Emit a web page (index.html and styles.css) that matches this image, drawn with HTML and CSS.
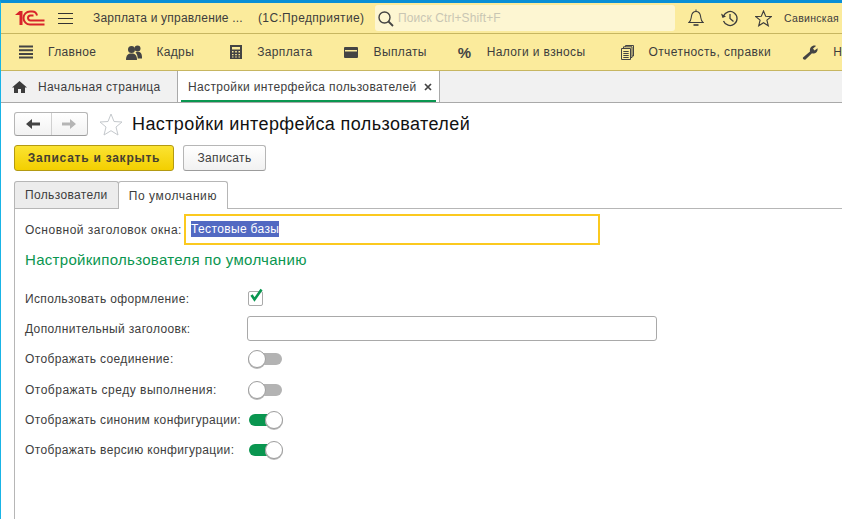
FILE: index.html
```html
<!DOCTYPE html>
<html lang="ru">
<head>
<meta charset="utf-8">
<title>Настройки интерфейса пользователей</title>
<link rel="stylesheet" href="styles.css">
</head>
<body>
<div class="app">
  <header class="topbar">
    <svg class="logo" width="30" height="16" viewBox="0 0 30 16">
      <path d="M0 5 L4.500 1 H7.500 V15 H4.500 V5 Z" fill="#d8232a"/>
      <path d="M29.500 14.500 H15 A6.500 6.500 0 0 1 15 1.500 H17 A5 5 0 0 1 22 5.500" fill="none" stroke="#d8232a" stroke-width="2"/>
      <path d="M29.500 10.500 H15.500 A2.500 2.500 0 0 1 15.500 5.500 H18.500" fill="none" stroke="#d8232a" stroke-width="2"/>
    </svg>
    <svg class="menu-icon" width="15" height="13" viewBox="0 0 15 13"><path d="M0 1.500H15M0 6.500H15M0 11.500H15" stroke="#333" stroke-width="1"/></svg>
    <span class="app-title">Зарплата и управление ...</span>
    <span class="app-kind">(1С:Предприятие)</span>
    <div class="search">
      <svg width="17" height="17" viewBox="0 0 17 17"><circle cx="7.500" cy="7.500" r="5.500" fill="none" stroke="#444" stroke-width="1.400"/><path d="M11.500 11.500L16 16" stroke="#444" stroke-width="1.800"/></svg>
      <span>Поиск Ctrl+Shift+F</span>
    </div>
    <svg class="top-icon bell" width="16" height="18" viewBox="0 0 16 18"><path d="M1 13.500C3 12 3 10 3.400 7.500C3.800 4.500 5.500 2.500 8 2.500C10.500 2.500 12.200 4.500 12.600 7.500C13 10 13 12 15 13.500Z" fill="none" stroke="#3c3c3c" stroke-width="1.100"/><path d="M8 .5V2.500" stroke="#3c3c3c"/><path d="M5.500 16H10.500" stroke="#3c3c3c" stroke-width="1.600"/></svg>
    <svg class="top-icon history" width="18" height="17" viewBox="0 0 18 17"><path d="M2.500 6A7 7 0 1 1 2.500 11" fill="none" stroke="#3c3c3c" stroke-width="1.300"/><path d="M0 3.500L5 6.500L1.500 8Z" fill="#3c3c3c"/><path d="M9 4V8.500L12.500 11.500" fill="none" stroke="#3c3c3c" stroke-width="1.300"/></svg>
    <svg class="top-icon star" width="17" height="17" viewBox="0 0 17 17"><path d="M8.500 1L10.700 6.300L16.200 6.600L11.900 10.200L13.300 15.800L8.500 12.700L3.700 15.800L5.100 10.200L.8 6.600L6.300 6.300Z" fill="none" stroke="#3c3c3c" stroke-width="1.100"/></svg>
    <span class="user">Савинская</span>
  </header>

  <nav class="sections">
    <a class="section s-main">
      <svg width="14" height="14" viewBox="0 0 14 14"><path d="M0 1.500H14M0 5.200H14M0 8.900H14M0 12.600H14" stroke="#444" stroke-width="2"/></svg>
      <span>Главное</span>
    </a>
    <a class="section s-staff">
      <svg width="16" height="15" viewBox="0 0 16 15"><circle cx="5.500" cy="4.500" r="3.500" fill="#444"/><path d="M0 15C0 10 2 8.500 5.500 8.500C9 8.500 11 10 11 15Z" fill="#444"/><circle cx="11.500" cy="3.500" r="3" fill="#444"/><path d="M11.800 15C11.800 11 11 9 9.500 7.500C10 7 11 6.800 11.800 6.800C14.500 6.800 16 8.500 16 12V13.500H11.800Z" fill="#444"/></svg>
      <span>Кадры</span>
    </a>
    <a class="section s-pay">
      <svg width="12" height="14" viewBox="0 0 12 14"><path fill-rule="evenodd" d="M0 0H12V14H0ZM2 2V4.500H10V2ZM2 6V7.500H3.500V6ZM5.200 6V7.500H6.800V6ZM8.500 6V7.500H10V6ZM2 9V10.200H3.500V9ZM5.200 9V10.200H6.800V9ZM8.500 9V10.200H10V9ZM2 11.500V12.500H3.500V11.500ZM5.200 11.500V12.500H6.800V11.500ZM8.500 11.500V12.500H10V11.500Z" fill="#444"/></svg>
      <span>Зарплата</span>
    </a>
    <a class="section s-out">
      <svg width="14" height="11" viewBox="0 0 14 11"><path fill-rule="evenodd" d="M1 0H13A1 1 0 0 1 14 1V10A1 1 0 0 1 13 11H1A1 1 0 0 1 0 10V1A1 1 0 0 1 1 0ZM1 3V4.500H13V3Z" fill="#444"/></svg>
      <span>Выплаты</span>
    </a>
    <a class="section s-tax">
      <b class="percent">%</b>
      <span>Налоги и взносы</span>
    </a>
    <a class="section s-rep">
      <svg width="13" height="15" viewBox="0 0 13 15"><path d="M.5 3.500H9.500V14.500H.5ZM2.500 3.500V1.800H11V12.500H9.500M4.500 1.800V.5H12.500V11H11M2.300 6.500H7.700M2.300 8.500H7.700M2.300 10.500H7.700M2.300 12.500H7.700" fill="none" stroke="#444"/></svg>
      <span>Отчетность, справки</span>
    </a>
    <a class="section s-set">
      <svg width="16" height="15" viewBox="0 0 16 15"><path d="M1 12.500L8 6.500C7.500 4 8.500 1.500 11 .8C12 .5 13 .5 14 1L11 3.500L12.500 5.500L15.500 3.200C16 5.500 14.800 8 12 8.500C11.200 8.600 10.500 8.500 10 8.300L3.500 14.500C2.500 15.200 .2 14 1 12.500Z" fill="#444"/></svg>
      <span>Настройка</span>
    </a>
  </nav>

  <div class="tabs">
    <a class="tab home">
      <svg width="15" height="12" viewBox="0 0 15 12"><path d="M7.500 0L15 6.500H13V12H9V8H6V12H2V6.500H0Z" fill="#3c3c3c"/></svg>
      <span>Начальная страница</span>
    </a>
    <a class="tab current">
      <span>Настройки интерфейса пользователей</span>
      <svg width="8" height="8" viewBox="0 0 8 8"><path d="M1 1L7 7M7 1L1 7" stroke="#444" stroke-width="1.700"/></svg>
    </a>
  </div>

  <main class="page">
    <div class="title-row">
      <div class="nav-buttons">
        <button class="nav-btn"><svg width="14" height="10" viewBox="0 0 14 10"><path d="M0 5L6 0V3.500H14V6.500H6V10Z" fill="#444"/></svg></button>
        <button class="nav-btn"><svg width="14" height="10" viewBox="0 0 14 10"><path d="M14 5L8 0V3.500H0V6.500H8V10Z" fill="#b5b5b5"/></svg></button>
      </div>
      <svg class="fav" width="24" height="23" viewBox="0 0 24 23"><path d="M12 1L15 8.500L23 9L17 14L19 22L12 17.700L5 22L7 14L1 9L9 8.500Z" fill="#fff" stroke="#c4c8cc"/></svg>
      <h1>Настройки интерфейса пользователей</h1>
    </div>
    <div class="actions">
      <button class="btn primary">Записать и закрыть</button>
      <button class="btn">Записать</button>
    </div>
    <div class="form-tabs">
      <a class="ftab">Пользователи</a>
      <a class="ftab active">По умолчанию</a>
    </div>
    <section class="panel">
      <div class="main-row">
        <label>Основной заголовок окна:</label>
        <div class="focus-input"><span class="selected">Тестовые базы</span></div>
      </div>
      <h2>Настройкипользователя по умолчанию</h2>
      <div class="rows">
        <div class="row">
          <label>Использовать оформление:</label>
          <span class="check"><svg width="16" height="15" viewBox="0 0 16 15"><path d="M3.500 7L6.500 11.500L13.500 1.500" fill="none" stroke="#0a9650" stroke-width="2.600"/></svg></span>
        </div>
        <div class="row">
          <label>Дополнительный заголоовк:</label>
          <span class="text-input"></span>
        </div>
        <div class="row">
          <label>Отображать соединение:</label>
          <span class="toggle"><i></i></span>
        </div>
        <div class="row">
          <label class="wide">Отображать среду выполнения:</label>
          <span class="toggle"><i></i></span>
        </div>
        <div class="row">
          <label>Отображать синоним конфигурации:</label>
          <span class="toggle on"><i></i></span>
        </div>
        <div class="row">
          <label>Отображать версию конфигурации:</label>
          <span class="toggle on"><i></i></span>
        </div>
      </div>
    </section>
  </main>
</div>
</body>
</html>
```

FILE: styles.css
```css
* { box-sizing: border-box; }
html, body { margin: 0; height: 100%; overflow: hidden; }
body {
  font-family: "Liberation Sans", Arial, sans-serif;
  font-size: 12px;
  letter-spacing: .36px;
  color: #3d3d3d;
  background: #fff;
}
svg { display: block; flex: none; }
button { font: inherit; letter-spacing: inherit; color: inherit; margin: 0; padding: 0; }

.app {
  width: 842px;
  height: 519px;
  overflow: hidden;
  border-top: 3px solid #0a8fd6;
  border-left: 1px solid #19b4e6;
  display: flex;
  flex-direction: column;
}

.topbar {
  height: 31px;
  flex: none;
  display: flex;
  align-items: center;
  background: #fbeb9c;
  border-bottom: 1px solid #c7b661;
  padding-left: 14px;
  white-space: nowrap;
}
.logo { width: 30px; }
.menu-icon { margin-left: 13px; }
.app-title { margin-left: 20px; width: 165px; letter-spacing: .2px; }
.app-kind { width: 117px; }
.search {
  width: 300px;
  height: 26px;
  display: flex;
  align-items: center;
  gap: 4px;
  padding-left: 2px;
  background: #fdf6d2;
  border-radius: 3px;
  color: #c9c6b4;
  letter-spacing: .12px;
}
.top-icon.bell { margin-left: 13px; }
.top-icon.history { margin-left: 17px; }
.top-icon.star { margin-left: 16px; }
.user { margin-left: 12px; font-size: 10.500px; letter-spacing: .3px; }

.sections {
  height: 37px;
  flex: none;
  display: flex;
  align-items: center;
  background: #fbeb9c;
  border-bottom: 1px solid #c7b661;
  padding-left: 18px;
  white-space: nowrap;
}
.section { display: flex; align-items: center; flex: none; }
.s-main span { margin-left: 15px; }
.s-staff { margin-left: 30px; }
.s-staff span { margin-left: 14px; }
.s-pay { margin-left: 36px; }
.s-pay span { margin-left: 15px; }
.s-out { margin-left: 31px; }
.s-out span { margin-left: 16px; }
.s-tax { margin-left: 31px; }
.s-tax span { margin-left: 15px; }
.percent { font-size: 15px; color: #444; width: 14px; letter-spacing: 0; }
.s-rep { margin-left: 36px; }
.s-rep span { margin-left: 14px; letter-spacing: .42px; }
.s-set { margin-left: 31px; }
.s-set span { margin-left: 15px; }

.tabs {
  height: 32px;
  flex: none;
  display: flex;
  background: #f1f1f1;
  border-bottom: 1px solid #a9a9a9;
}
.tab { display: flex; align-items: center; white-space: nowrap; height: 31px; }
.home { width: 177px; padding-left: 11px; gap: 11px; border-right: 1px solid #a9a9a9; }
.current {
  width: 262px;
  padding: 0 7px 0 10px;
  justify-content: space-between;
  background: #fff;
  border-right: 1px solid #a9a9a9;
  position: relative;
}
.current::after {
  content: "";
  position: absolute;
  left: 3px;
  right: 3px;
  bottom: 0;
  height: 2px;
  background: #0a9650;
}

.page { flex: 1; padding: 9px 0 0 13px; display: flex; flex-direction: column; min-height: 0; }
.title-row { display: flex; align-items: center; height: 24px; }
.nav-buttons {
  display: flex;
  width: 74px;
  height: 24px;
  border: 1px solid #b6b6b6;
  border-bottom-color: #9c9c9c;
  border-radius: 3px;
  background: linear-gradient(#fff, #f2f2f2);
}
.nav-btn {
  flex: 1;
  border: 0;
  background: none;
  display: flex;
  align-items: center;
  justify-content: center;
}
.nav-btn + .nav-btn { border-left: 1px solid #d0d0d0; }
.fav { margin-left: 11px; }
h1 { margin: 0 0 0 9px; font-size: 18px; font-weight: 400; color: #111; letter-spacing: .4px; white-space: nowrap; }

.actions { display: flex; gap: 9px; margin-top: 9px; height: 26px; }
.btn {
  width: 83px;
  height: 26px;
  border: 1px solid #b6b6b6;
  border-bottom-color: #9c9c9c;
  border-radius: 3px;
  background: linear-gradient(#fff, #f1f1f1);
  white-space: nowrap;
}
.btn.primary {
  width: 160px;
  border-color: #b39a12;
  background: linear-gradient(#fbe332, #f3cf00);
  font-weight: 700;
  letter-spacing: .75px;
  color: #454030;
}

.form-tabs { display: flex; margin-top: 10px; height: 27px; position: relative; z-index: 1; }
.ftab {
  height: 27px;
  display: flex;
  align-items: center;
  padding: 0 10px;
  border: 1px solid #b6b6b6;
  border-bottom: 0;
  border-radius: 3px 3px 0 0;
  background: #ececec;
  white-space: nowrap;
}
.ftab.active { background: #fff; height: 28px; margin-left: -1px; padding: 0 10px; letter-spacing: .6px; }

.panel {
  flex: 1;
  border-top: 1px solid #b6b6b6;
  border-left: 1px solid #b6b6b6;
  padding: 5px 0 0 10px;
  min-height: 0;
}
.main-row { display: flex; align-items: center; height: 31px; }
.main-row label { width: 159px; white-space: nowrap; letter-spacing: .5px; }
.focus-input {
  width: 416px;
  height: 31px;
  border: 2px solid #fbc91f;
  padding: 5px 0 0 5px;
  color: #fff;
}
.selected { display: inline-block; height: 16px; line-height: 16px; background: #5269c2; }
h2 {
  margin: 6px 0 0;
  font-size: 15px;
  line-height: 18px;
  font-weight: 400;
  color: #0a9650;
  letter-spacing: .3px;
  white-space: nowrap;
}

.rows { margin-top: 14.500px; display: flex; flex-direction: column; }
.row { display: flex; align-items: center; height: 30.300px; white-space: nowrap; }
.row label { width: 222px; flex: none; }
.row label.wide { letter-spacing: .5px; }
.check {
  width: 15px;
  height: 15px;
  margin-left: 1px;
  border: 1px solid #aaa;
  border-radius: 2px;
  position: relative;
}
.check svg { position: absolute; left: -1px; top: -4px; }
.text-input {
  width: 410px;
  height: 25px;
  border: 1px solid #a9a9a9;
  border-radius: 3px;
}
.toggle {
  display: block;
  width: 33px;
  height: 12px;
  margin-left: 2px;
  border-radius: 6px;
  background: #b3b3b3;
  position: relative;
}
.toggle i {
  position: absolute;
  left: -1px;
  top: -3px;
  width: 18px;
  height: 18px;
  border-radius: 50%;
  background: #fff;
  border: 1px solid #9d9d9d;
  box-shadow: 0 1px 0 #bbb;
}
.toggle.on { background: #0a9650; }
.toggle.on i { left: auto; right: -1px; }
```
